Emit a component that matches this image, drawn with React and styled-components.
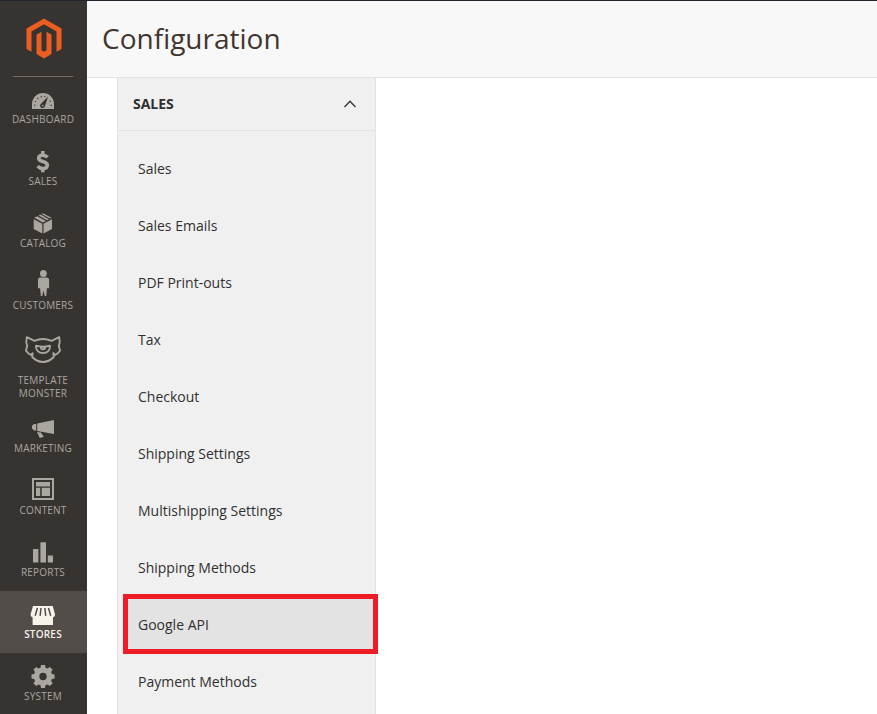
import React from 'react';
import styled, { createGlobalStyle } from 'styled-components';

const GlobalStyle = createGlobalStyle`
  * { box-sizing: border-box; }
  html, body { margin: 0; padding: 0; }
  body { font-family: 'Open Sans', 'Noto Sans', sans-serif; background: #fff; overflow: hidden; }
`;

const Page = styled.div`
  display: flex;
  width: 877px;
  height: 714px;
  border-top: 1px solid #22242b;
  overflow: hidden;
`;

const Sidebar = styled.nav`
  flex: 0 0 87px;
  background: #373330;
`;

const Brand = styled.div`
  height: 76px;
  margin: 0 14px 0 13px;
  padding: 17px 0 0 1px;
  display: flex;
  justify-content: center;
  align-items: flex-start;
  border-bottom: 1px solid #736d69;

  svg { display: block; width: 36px; height: 42px; }
`;

const NavItem = styled.a`
  display: flex;
  flex-direction: column;
  align-items: center;
  width: 87px;
  height: ${(p) => (p.$tall ? 81 : 62)}px;
  margin-top: ${(p) => (p.$first ? -1 : 0)}px;
  padding-right: 1px;
  background: ${(p) => (p.$active ? '#524d49' : 'transparent')};
  color: ${(p) => (p.$active ? '#f7f3eb' : '#aaa6a0')};
  text-decoration: none;
`;

const NavIcon = styled.svg`
  display: block;
  flex: none;
  width: 86px;
  height: ${(p) => (p.$tall ? 50 : 37)}px;
  fill: currentColor;
`;

const NavLabel = styled.span`
  font-size: 10px;
  line-height: 13px;
  letter-spacing: 0.2px;
  font-weight: ${(p) => (p.$active ? 600 : 400)};
  text-align: center;
  text-transform: uppercase;
  white-space: pre-line;
`;

const Main = styled.main`
  flex: 1;
  display: flex;
  flex-direction: column;
  min-width: 0;
`;

const Header = styled.header`
  flex: 0 0 77px;
  padding-left: 15px;
  background: #f8f8f8;
  border-bottom: 1px solid #e3e3e3;
`;

const Title = styled.h1`
  margin: 0;
  color: #41362f;
  font-size: 28px;
  font-weight: 400;
  line-height: 74px;
`;

const ConfigPanel = styled.section`
  flex: 1;
  width: 259px;
  margin-left: 30px;
  background: #f0f0f0;
  border: solid #e3e3e3;
  border-width: 0 1px;
`;

const SectionHeader = styled.div`
  display: flex;
  align-items: center;
  justify-content: space-between;
  height: 53px;
  padding: 0 18px 0 15px;
  border-bottom: 1px solid #e3e3e3;
  color: #303030;

  svg { display: block; }
`;

const SectionTitle = styled.strong`
  padding-bottom: 2px;
  font-size: 14px;
  font-weight: 700;
`;

const SectionList = styled.ul`
  margin: 0;
  padding: 9px 0 0;
  list-style: none;
`;

const SectionItem = styled.li`
  position: relative;
  height: 57px;
  padding-left: 20px;
  color: #303030;
  font-size: 14px;
  line-height: 57px;
`;

const Highlight = styled.span`
  position: absolute;
  top: -2px;
  left: 5px;
  width: 255px;
  height: 60px;
  background: #e3e3e3;
  border: 5px solid #ee1c25;
`;

const ItemText = styled.span`
  position: relative;
`;

const icons = {
  dashboard: (
    <>
      <path d="M32 33v-5a11 11 0 0 1 22 0v5z" />
      <path d="M48 20.5l-6.6 6.9a2.5 2.5 0 1 0 3.7 2.4z" fill="#373330" />
      <circle cx="42.8" cy="29.6" r="0.9" />
      <g fill="#373330">
        <circle cx="34.8" cy="29.3" r="0.7" />
        <circle cx="35.5" cy="25.6" r="0.7" />
        <circle cx="37.9" cy="22.5" r="0.7" />
        <circle cx="41.2" cy="20.7" r="0.7" />
        <circle cx="44.8" cy="20.4" r="0.7" />
        <circle cx="50.2" cy="25.2" r="0.7" />
        <circle cx="51.2" cy="29.3" r="0.7" />
      </g>
    </>
  ),
  sales: (
    <path
      d="M47.6 19.3c-1.4-1.5-2.9-2.1-4.8-2.1-2.6 0-4.1 1.1-4.1 3 0 4.5 8.6 2.3 8.6 7 0 2.2-1.8 3.3-4.5 3.3-2 0-3.8-.8-5.2-2.4M42.8 13v4M42.8 30v4.2"
      fill="none" stroke="currentColor" strokeWidth="3.6"
    />
  ),
  catalog: (
    <>
      <path d="M33.7 19.2l8.6 4.6v9.6l-8.6-4.4zM52 19.2l-8.5 4.6v9.6L52 29z" />
      <path d="M34.3 17.8l3-1.6 8.6 4.7-3 1.7zM38.6 15.5l1.7-.9 8.6 4.7-1.7.9zM41.6 13.9l1.3-.7 8.5 4.6-1.3.8z" />
    </>
  ),
  customers: (
    <>
      <ellipse cx="43.4" cy="11.4" rx="3.4" ry="3.5" />
      <path d="M40.2 15.5h6.4c1.6 0 2.5 1 2.5 2.5v8.2h-2.2L46.3 34h-1.5l-1.3-5.4-1.2 5.4h-1.5l-.7-7.8H38V18c0-1.5.7-2.5 2.2-2.5z" />
    </>
  ),
  monster: (
    <g fill="none" stroke="currentColor" strokeWidth="1.9" strokeLinejoin="round">
      <path d="M34.4 16.8c5.6-2.3 11.6-2.3 17.2 0l7.6-3.7c.8 3.3.7 6.3-.4 9l1.3 4.3c-1.4 2.2-3.2 3.7-5.4 4.6l-1.3-1.9.3 3.9c-6.2 6.6-15.2 6.6-21.4 0l.3-3.9-1.3 1.9c-2.2-.9-4-2.4-5.4-4.6l1.3-4.3c-1.1-2.7-1.2-5.7-.4-9z" />
      <path d="M36 21.7c4.6 1.4 9.4 1.4 14 0 .2 4.8-2.6 7.4-7 7.4s-7.2-2.6-7-7.4z" />
      <path d="M40.5 23c.1 3.5 4.9 3.5 5 0l-1.7 1.5z" strokeWidth="1.3" />
    </g>
  ),
  marketing: (
    <>
      <path d="M37.2 18.5L54 15v14l-16.8-3.1z" />
      <path d="M36.2 19v6.6h-2.1L32 23.5v-2.8l2-1.7zM37 27l3.8.6 3 4.1-4 1.3z" />
    </>
  ),
  content: (
    <path fillRule="evenodd" d="M32 11h22v22H32zM34 13v18h18V13zM36 15h14v4.4H36zM36 20.8h4.2V29H36zM41.7 20.8H50V29h-8.3z" />
  ),
  reports: <path d="M33 20h5.4v13.5H33zM40.4 13.2H46v20.3h-5.6zM47.8 26.4H53v7.1h-5.2z" />,
  stores: (
    <>
      <path d="M33 15h19.7l2.3 8.2c0 1.8-.8 3-2 3.1V34H32.6v-7.7c-1.3-.2-2-1.5-2-3.1z" />
      <path
        d="M37.4 17l-2.2 7.8M41 17l-.9 7.8M44.9 17l.8 7.8M48.5 17l2.2 7.8"
        fill="none" stroke="#524d49" strokeWidth="1.5"
      />
    </>
  ),
  system: (
    <path fillRule="evenodd" d="M41 12h4l.5 2.8 2 .8 2.4-1.7 2.8 2.8-1.6 2.4.8 2 2.7.4v4l-2.7.5-.8 2 1.6 2.3-2.8 2.8-2.4-1.6-2 .8-.5 2.7h-4l-.5-2.7-2-.8-2.3 1.6-2.8-2.8 1.6-2.3-.8-2-2.7-.5v-4l2.7-.4.8-2-1.6-2.4 2.8-2.8 2.3 1.7 2-.8zM43 19.8a3.7 3.7 0 1 0 0 7.4 3.7 3.7 0 0 0 0-7.4z" />
  ),
};

const navItems = [
  { label: 'Dashboard', icon: 'dashboard' },
  { label: 'Sales', icon: 'sales' },
  { label: 'Catalog', icon: 'catalog' },
  { label: 'Customers', icon: 'customers' },
  { label: 'Template\nMonster', icon: 'monster', tall: true },
  { label: 'Marketing', icon: 'marketing' },
  { label: 'Content', icon: 'content' },
  { label: 'Reports', icon: 'reports' },
  { label: 'Stores', icon: 'stores', active: true },
  { label: 'System', icon: 'system' },
];

const sections = [
  'Sales',
  'Sales Emails',
  'PDF Print-outs',
  'Tax',
  'Checkout',
  'Shipping Settings',
  'Multishipping Settings',
  'Shipping Methods',
  'Google API',
  'Payment Methods',
];

const MagentoLogo = () => (
  <svg viewBox="0 0 36 42">
    <path
      fill="#eb5d20"
      d="M18 .5l17.5 10v20.4l-5 2.9V13.4L18 6.2 5.5 13.4v20.4l-5-2.9V10.5zM15.5 13.8v18.4l2.5 1.5 2.5-1.5V13.8l5 2.9v19.4L18 40.5l-7.5-4.4V16.7z"
    />
  </svg>
);

export default function App() {
  return (
    <>
      <GlobalStyle />
      <Page>
        <Sidebar>
          <Brand>
            <MagentoLogo />
          </Brand>
          {navItems.map(({ label, icon, tall, active }, i) => (
            <NavItem key={label} href="#" $tall={tall} $active={active} $first={i === 0}>
              <NavIcon $tall={tall} viewBox={`0 0 86 ${tall ? 50 : 37}`}>
                {icons[icon]}
              </NavIcon>
              <NavLabel $active={active}>{label}</NavLabel>
            </NavItem>
          ))}
        </Sidebar>
        <Main>
          <Header>
            <Title>Configuration</Title>
          </Header>
          <ConfigPanel>
            <SectionHeader>
              <SectionTitle>SALES</SectionTitle>
              <svg width="14" height="10" viewBox="0 0 14 10">
                <path d="M1.5 8L7 2.3 12.5 8" fill="none" stroke="#41362f" strokeWidth="1.4" />
              </svg>
            </SectionHeader>
            <SectionList>
              {sections.map((name) => (
                <SectionItem key={name}>
                  {name === 'Google API' && <Highlight />}
                  <ItemText>{name}</ItemText>
                </SectionItem>
              ))}
            </SectionList>
          </ConfigPanel>
        </Main>
      </Page>
    </>
  );
}
